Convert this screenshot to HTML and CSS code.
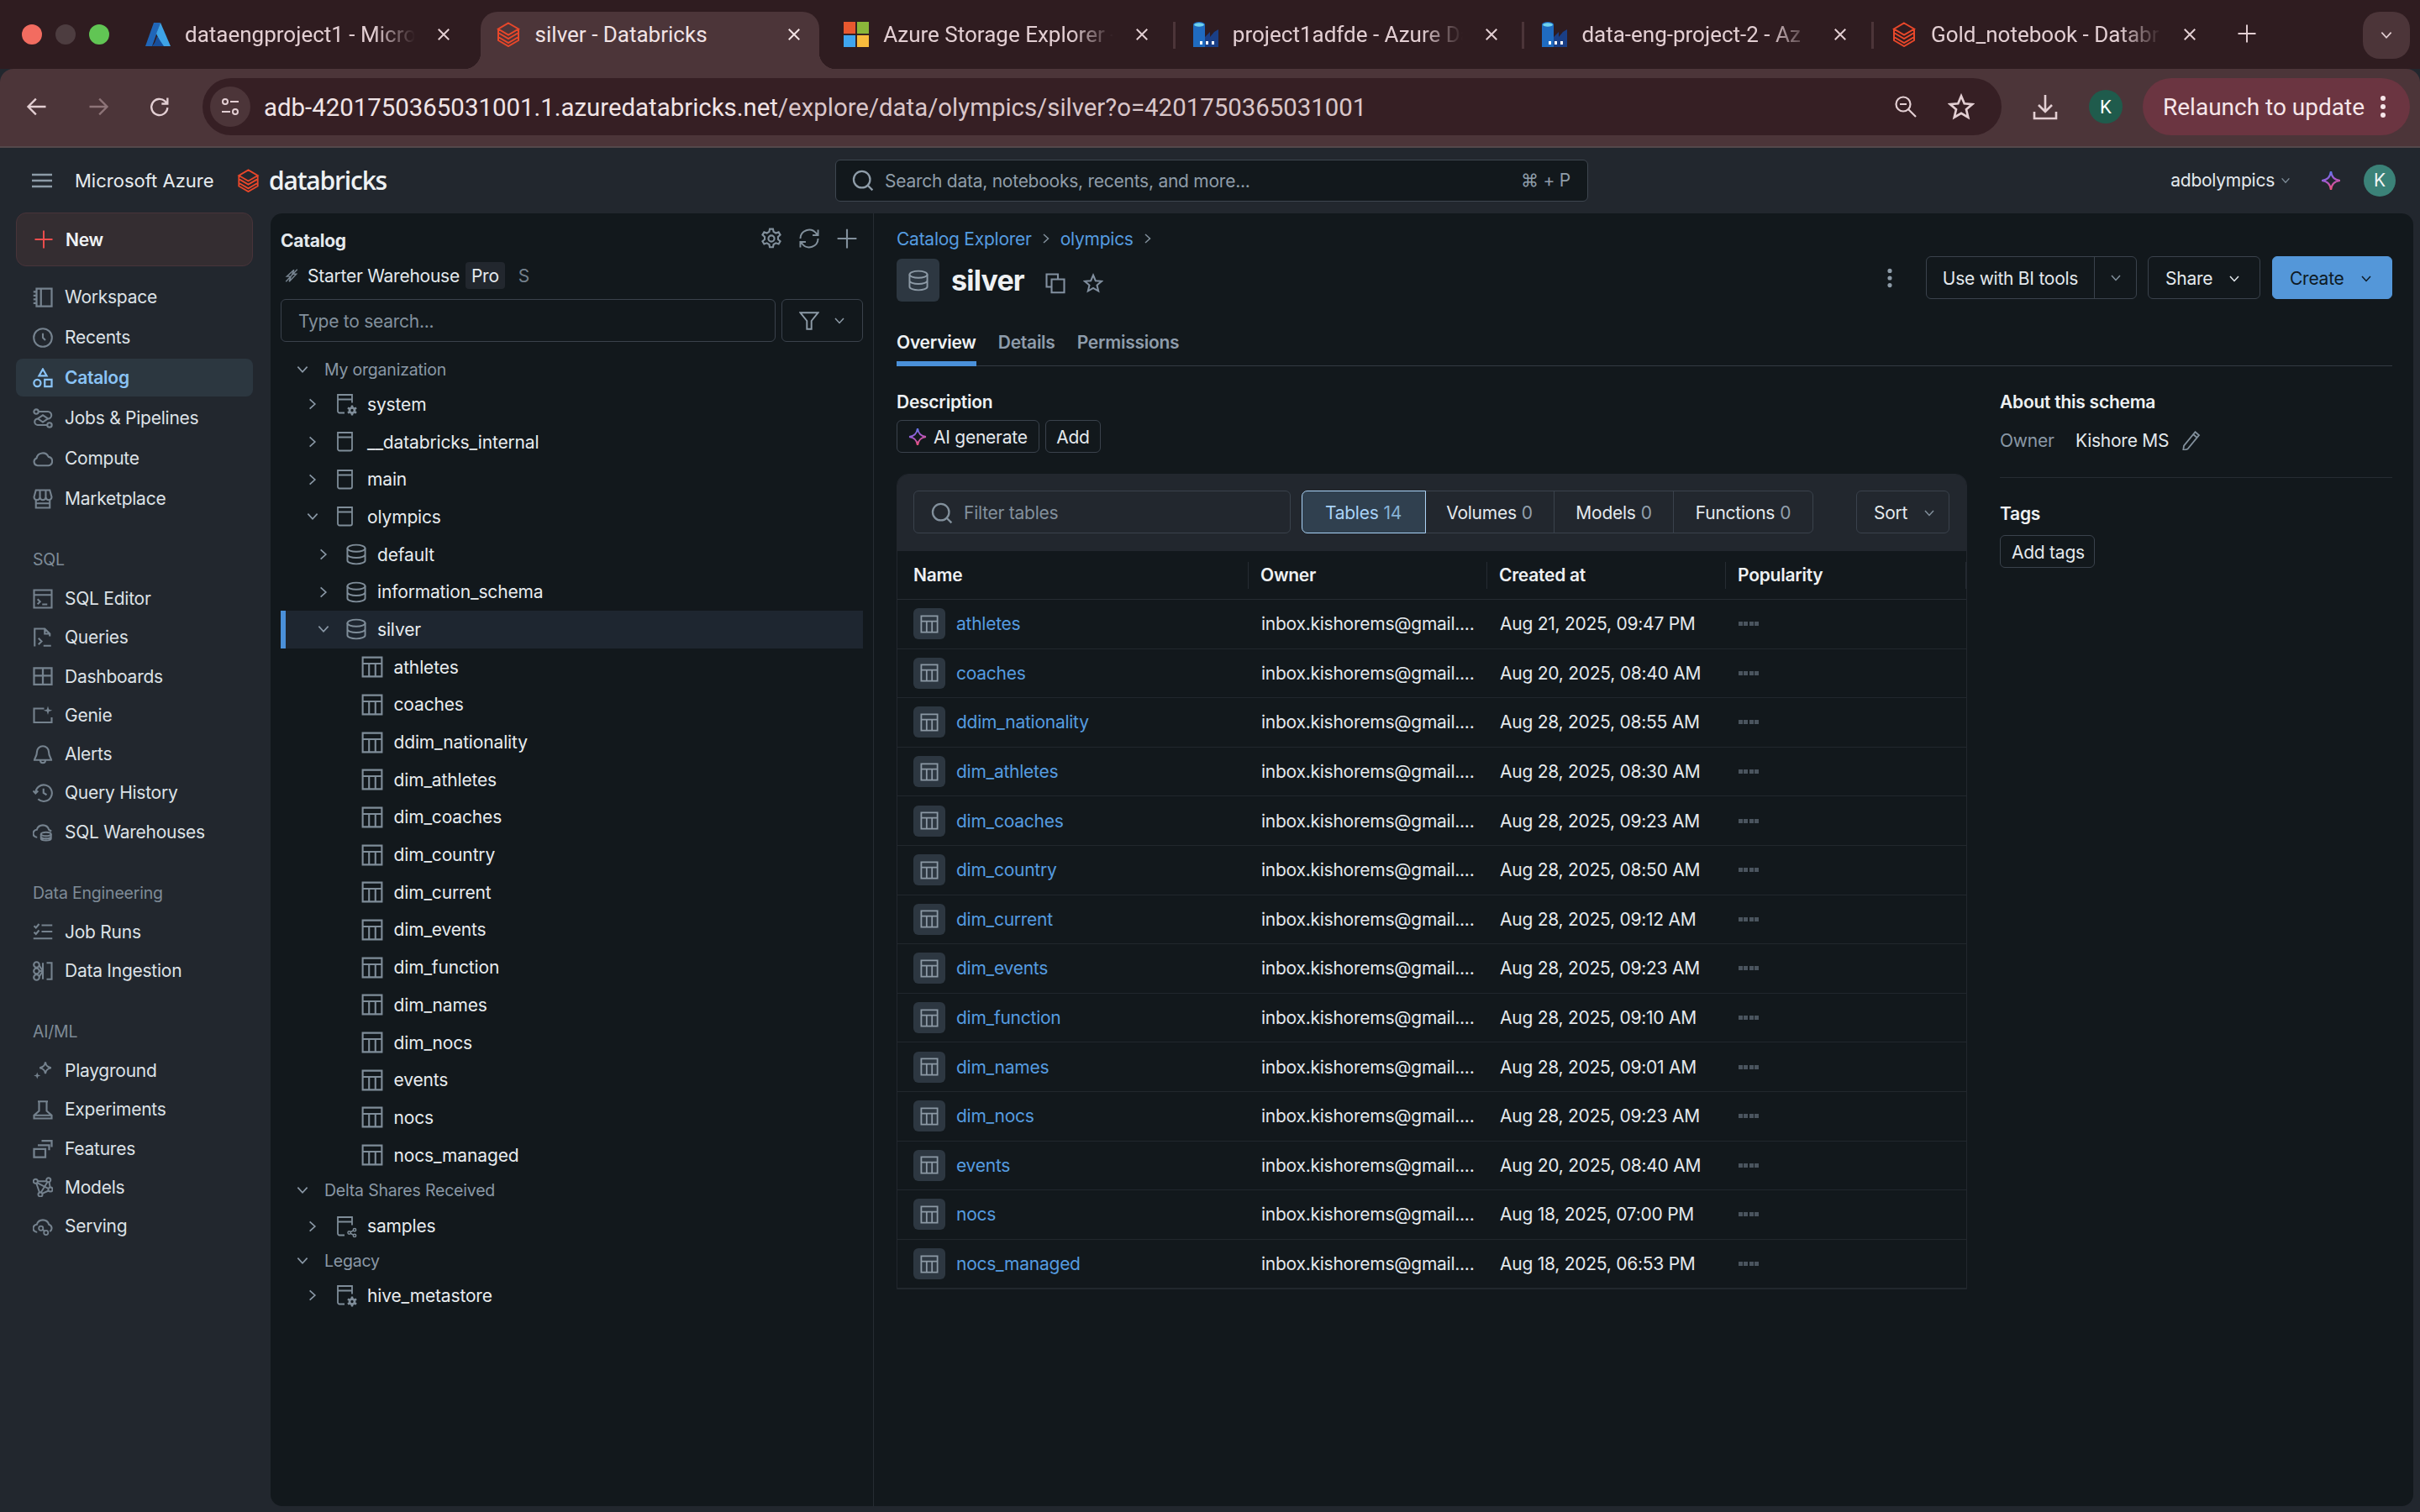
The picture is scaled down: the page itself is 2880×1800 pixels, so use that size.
FILE: index.html
```html
<!DOCTYPE html>
<html lang="en">
<head>
<meta charset="utf-8">
<title>silver - Databricks</title>
<link rel="stylesheet" href="styles.css">
</head>
<body>
<svg class="defs" xmlns="http://www.w3.org/2000/svg">
  <defs>
    <linearGradient id="spark" x1="0.2" y1="0" x2="0.6" y2="1"><stop offset="0" stop-color="#4f7df0"/><stop offset=".5" stop-color="#a858d0"/><stop offset="1" stop-color="#f0506e"/></linearGradient>
    <symbol id="dbx" viewBox="0 0 28 30"><path d="M14 1.5 26 8.5 14 15.5 2 8.5Z M2 8.5V13L14 20 26 13V8.5 M2 13V18L14 25 26 18V13 M2 18V22L14 29 26 22V18" fill="none" stroke="#e8472a" stroke-width="2"/></symbol>
    <symbol id="azure" viewBox="0 0 30 30"><path d="M10 1h8L8 29H0z" fill="#2066b8"/><path d="M18 1 30 29H20L13 14z" fill="#3ea3e6"/><path d="M14 17 22 29H8l3-4z" fill="#174f9c"/></symbol>
    <symbol id="ms" viewBox="0 0 32 32"><path d="M0 0h15v15H0z" fill="#e8582f"/><path d="M17 0h15v15H17z" fill="#8ab63a"/><path d="M0 17h15v15H0z" fill="#3fa5ef"/><path d="M17 17h15v15H17z" fill="#f7bb3d"/></symbol>
    <symbol id="adf" viewBox="0 0 30 30"><path d="M0 3a7 3 0 0 1 14 0v27H0z" fill="#1f6bc0"/><ellipse cx="7" cy="3.5" rx="6" ry="2.2" fill="#6fd3ee"/><path d="M14 18 20 12v6l5-6 5-3v21H14z" fill="#1a3f86"/><path d="M8 23h3v4H8zM15 23h3v4h-3zM22 23h3v4h-3z" fill="#fff"/></symbol>
    <symbol id="x" viewBox="0 0 16 16"><path d="M3 3 13 13M13 3 3 13" fill="none" stroke="currentColor" stroke-width="1.6"/></symbol>
    <symbol id="plus" viewBox="0 0 16 16"><path d="M8 1v14M1 8h14" fill="none" stroke="currentColor" stroke-width="1.3"/></symbol>
    <symbol id="cd" viewBox="0 0 16 16"><path d="M3 5 8 10.5 13 5" fill="none" stroke="currentColor" stroke-width="1.5"/></symbol>
    <symbol id="cr" viewBox="0 0 16 16"><path d="M5 3 10.5 8 5 13" fill="none" stroke="currentColor" stroke-width="1.5"/></symbol>
    <symbol id="back" viewBox="0 0 24 24"><path d="M21 12H4M11 4l-8 8 8 8" fill="none" stroke="currentColor" stroke-width="2"/></symbol>
    <symbol id="fwd" viewBox="0 0 24 24"><path d="M3 12h17M13 4l8 8-8 8" fill="none" stroke="currentColor" stroke-width="2"/></symbol>
    <symbol id="reload" viewBox="0 0 24 24"><path d="M20 13a8.2 8.2 0 1 1-2.6-6.6L20 9M20 3v6h-6" fill="none" stroke="currentColor" stroke-width="2"/></symbol>
    <symbol id="site" viewBox="0 0 24 24"><g fill="none" stroke="currentColor" stroke-width="2"><circle cx="6" cy="6" r="3"/><path d="M12 6h10M2 18h10"/><circle cx="18" cy="18" r="3"/></g></symbol>
    <symbol id="zoomout" viewBox="0 0 28 28"><g fill="none" stroke="currentColor" stroke-width="2.2"><circle cx="11" cy="11" r="8.5"/><path d="M17 17l9 9M7 11h8"/></g></symbol>
    <symbol id="star" viewBox="0 0 24 24"><path d="M12 2.5l2.8 6.7 7.2.6-5.5 4.7 1.7 7-6.2-3.7-6.2 3.7 1.7-7L2 9.8l7.2-.6z" fill="none" stroke="currentColor" stroke-width="2"/></symbol>
    <symbol id="dl" viewBox="0 0 32 32"><path d="M16 2v20M8 14l8 8 8-8M3 22v8h26v-8" fill="none" stroke="currentColor" stroke-width="2.6"/></symbol>
    <symbol id="burger" viewBox="0 0 24 18"><path d="M0 2h24M0 9h24M0 16h24" fill="none" stroke="currentColor" stroke-width="2.4"/></symbol>
    <symbol id="search" viewBox="0 0 16 16"><g fill="none" stroke="currentColor" stroke-width="1.4"><circle cx="7.2" cy="7.2" r="6"/><path d="M11.5 11.5 15 15"/></g></symbol>
    <symbol id="sparkle" viewBox="0 0 16 16"><path d="M8 .8c.7 4.6 2.600 6.5 7.200 7.200-4.600.7-6.500 2.600-7.200 7.200-.7-4.600-2.600-6.500-7.200-7.200C5.400 7.300 7.300 5.400 8 .8z" fill="none" stroke="url(#spark)" stroke-width="1.5"/></symbol>
    <symbol id="n-ws" viewBox="0 0 16 16"><path d="M3 1h12v14H3zM6.5 1v14M.5 3.5H3M.5 6.5H3M.5 9.5H3M.5 12.5H3" fill="none" stroke="currentColor" stroke-width="1.5"/></symbol>
    <symbol id="n-clock" viewBox="0 0 16 16"><g fill="none" stroke="currentColor" stroke-width="1.4"><circle cx="8" cy="8" r="7.2"/><path d="M8 4.5V8l2 2"/></g></symbol>
    <symbol id="n-cat" viewBox="0 0 16 16"><g fill="none" stroke="currentColor" stroke-width="1.5"><path d="M8 1l3 5.2H5z"/><circle cx="3.6" cy="12" r="2.7"/><path d="M9.5 9.3h5.500v5.400H9.500z"/></g></symbol>
    <symbol id="n-jobs" viewBox="0 0 16 16"><g fill="none" stroke="currentColor" stroke-width="1.4"><circle cx="2.7" cy="2.7" r="1.8"/><circle cx="13.3" cy="13.3" r="1.8"/><path d="M4.5 2.7H12a2.8 2.8 0 0 1 0 5.6L8 5.500 4 8.300"/><path d="M4 8.300a2.500 2.500 0 0 0 0 5h7.500M4 8.300l4 2.700 4-2.700"/></g></symbol>
    <symbol id="n-cloud" viewBox="0 0 16 16"><path d="M3.800 13.500A3 3 0 0 1 3 7.700 5 5 0 0 1 12.500 6.600 3.500 3.500 0 0 1 12.500 13.500z" fill="none" stroke="currentColor" stroke-width="1.4"/></symbol>
    <symbol id="n-store" viewBox="0 0 16 16"><path d="M1 6.500 2.500 1h11L15 6.500a2.300 2.300 0 0 1-4.700 0 2.300 2.300 0 0 1-4.600 0 2.300 2.300 0 0 1-4.700 0zM5.700 1v5.500M10.300 1v5.500M2.500 9v6h11V9M2.500 11.500h11" fill="none" stroke="currentColor" stroke-width="1.4"/></symbol>
    <symbol id="n-edit" viewBox="0 0 16 16"><path d="M1 1h14v14H1zM1 4.800h14M3.800 8.200l2 2-2 2M7.500 12.300h4" fill="none" stroke="currentColor" stroke-width="1.4"/></symbol>
    <symbol id="n-query" viewBox="0 0 16 16"><path d="M1.500 15V1h8l4 4v2M9.500 1v4h4M4.500 8.500l2.500 2.500-2.500 2.500M8.500 14.500h6" fill="none" stroke="currentColor" stroke-width="1.4"/></symbol>
    <symbol id="n-dash" viewBox="0 0 16 16"><path d="M1 1.500h14v13H1zM1 7.500h14M8 1.500v13" fill="none" stroke="currentColor" stroke-width="1.5"/></symbol>
    <symbol id="n-genie" viewBox="0 0 16 16"><path d="M9 3H1v11h14V10" fill="none" stroke="currentColor" stroke-width="1.4"/><path d="M12 1l.8 2.700 2.700.8-2.700.8L12 8l-.8-2.700-2.700-.8 2.700-.8z" fill="currentColor"/></symbol>
    <symbol id="n-bell" viewBox="0 0 16 16"><path d="M8 1.500A4.700 4.700 0 0 0 3.300 6.200c0 3.500-2 5-2 6.300h13.400c0-1.300-2-2.800-2-6.300A4.700 4.700 0 0 0 8 1.500zM6 12.800a2 2 0 0 0 4 0" fill="none" stroke="currentColor" stroke-width="1.4"/></symbol>
    <symbol id="n-hist" viewBox="0 0 16 16"><path d="M2.200 8a6.500 6.500 0 1 1 2 4.800M.3 6.300 2.200 8.300l2-2M8.500 4.500V8l2.500 1.500" fill="none" stroke="currentColor" stroke-width="1.4"/></symbol>
    <symbol id="n-wh" viewBox="0 0 16 16"><path d="M3.500 12.500a3 3 0 0 1-.3-6 5 5 0 0 1 9.600 0l2 1.200" fill="none" stroke="currentColor" stroke-width="1.4"/><g fill="none" stroke="currentColor" stroke-width="1.3"><ellipse cx="10.5" cy="10" rx="4" ry="1.5"/><path d="M6.500 10v3.500c0 .8 1.800 1.500 4 1.500s4-.7 4-1.500V10M6.500 12c0 .8 1.800 1.500 4 1.500s4-.7 4-1.500"/></g></symbol>
    <symbol id="n-runs" viewBox="0 0 16 16"><path d="M1 3.500l1.500 1.500L5 2M7 3h8.500M1 8.500 2.500 10 5 7M7 8h8.500M.5 13.500h15" fill="none" stroke="currentColor" stroke-width="1.4"/></symbol>
    <symbol id="n-ing" viewBox="0 0 16 16"><g fill="none" stroke="currentColor" stroke-width="1.4"><circle cx="3" cy="3" r="2.2"/><circle cx="3" cy="8" r="2.2"/><circle cx="3" cy="13" r="2.2"/><path d="M5 3.500 8 8l-3 4.500M5.200 8H8M8 1.500v13M11 1.500h4v13h-4"/></g></symbol>
    <symbol id="n-play" viewBox="0 0 16 16"><path d="M10 1c.4 2.700 1.400 3.800 4.500 4.500-3.100.7-4.100 1.800-4.500 4.500-.4-2.700-1.400-3.800-4.500-4.500C8.600 4.800 9.600 3.700 10 1z" fill="none" stroke="currentColor" stroke-width="1.4"/><path d="M3.500 9l.7 2 2 .7-2 .7-.7 2-.7-2-2-.7 2-.7z" fill="currentColor"/></symbol>
    <symbol id="n-flask" viewBox="0 0 16 16"><path d="M4 1.500h8M5 1.500V9L1 12.500v2.500h14v-2.500L11 9V1.500M1.500 12.500h13" fill="none" stroke="currentColor" stroke-width="1.4"/></symbol>
    <symbol id="n-feat" viewBox="0 0 16 16"><path d="M1 8.500h9v6.500H1zM4 5.500h9v4M7 2h8v5" fill="none" stroke="currentColor" stroke-width="1.5"/></symbol>
    <symbol id="n-model" viewBox="0 0 16 16"><g fill="none" stroke="currentColor" stroke-width="1.3"><circle cx="2.2" cy="3.500" r="1.7"/><circle cx="12.5" cy="2.500" r="1.7"/><circle cx="14" cy="10" r="1.7"/><circle cx="6" cy="14" r="1.7"/><path d="M3.900 3.500h6.900M3.500 4.800l8.800 4.500M11.700 4 6.500 12.400M12.500 11l-5 2.300M13 4l.8 4.400M2.800 5l2.600 7.500"/></g></symbol>
    <symbol id="n-serve" viewBox="0 0 16 16"><path d="M3.500 12.500a3 3 0 0 1-.3-6 5 5 0 0 1 9.600 0 3 3 0 0 1 .7 5.500" fill="none" stroke="currentColor" stroke-width="1.4"/><g fill="none" stroke="currentColor" stroke-width="1.2"><circle cx="6.500" cy="9.500" r="1.7"/><circle cx="10.500" cy="13" r="1.7"/><path d="M8 10.500l1.200 1.200"/></g></symbol>
    <symbol id="share" viewBox="0 0 16 16"><g fill="none" stroke="currentColor" stroke-width="2"><circle cx="3.500" cy="8" r="2.200"/><circle cx="12" cy="3.500" r="2.200"/><circle cx="12" cy="12.500" r="2.200"/><path d="M5.500 7l4.500-2.500M5.500 9l4.500 2.500"/></g></symbol>
    <symbol id="gear" viewBox="0 0 16 16"><g fill="none" stroke="currentColor" stroke-width="1.3"><circle cx="8" cy="8" r="2.200"/><path d="M6.800 1h2.400l.4 2 1.700 1 2-.7 1.200 2-1.600 1.400v1.900l1.600 1.400-1.200 2-2-.7-1.700 1-.4 2H6.800l-.4-2-1.700-1-2 .7-1.200-2 1.600-1.400V6.700L1.500 5.300l1.200-2 2 .7 1.700-1z"/></g></symbol>
    <symbol id="gearfill" viewBox="0 0 16 16"><path d="M6.500 0h3l.4 2.400 1.900 1.100 2.300-.9 1.500 2.600-1.900 1.500v2.600l1.900 1.500-1.500 2.600-2.300-.9-1.900 1.100-.4 2.400h-3l-.4-2.400-1.900-1.100-2.300.9L.4 10.800l1.900-1.500V6.700L.4 5.200l1.500-2.600 2.300.9 1.900-1.100zM8 5.800a2.200 2.200 0 1 0 0 4.400 2.200 2.200 0 0 0 0-4.400z" fill="currentColor" fill-rule="evenodd"/></symbol>
    <symbol id="refresh" viewBox="0 0 16 16"><path d="M1.500 8A6.500 6.500 0 0 1 13 4l1.500 1.500M14.500 1.500v4h-4M14.500 8A6.500 6.500 0 0 1 3 12l-1.500-1.500M1.500 14.500v-4h4" fill="none" stroke="currentColor" stroke-width="1.2"/></symbol>
    <symbol id="slash" viewBox="0 0 16 16"><path d="M10.500 2 8.800 6.500H13L5.500 14.500l1.700-5.500H3zM14 1.500 2 14.500" fill="none" stroke="currentColor" stroke-width="1.300"/></symbol>
    <symbol id="filter" viewBox="0 0 16 16"><path d="M1 1.500h14L9.800 8v6.500H6.200V8z" fill="none" stroke="currentColor" stroke-width="1.3"/></symbol>
    <symbol id="cat" viewBox="0 0 20 24"><path d="M9 23H3a2 2 0 0 1-2-2V1.500h17V11M1 7h17" fill="none" stroke="currentColor" stroke-width="1.8"/></symbol>
    <symbol id="cat-plain" viewBox="0 0 20 24"><path d="M3 23a2 2 0 0 1-2-2V1.500h17V21a2 2 0 0 1-2 2zM1 7h17" fill="none" stroke="currentColor" stroke-width="1.8"/></symbol>
    <symbol id="db" viewBox="0 0 16 16"><g fill="none" stroke="currentColor" stroke-width="1.2"><ellipse cx="8" cy="3.500" rx="6.500" ry="2.500"/><path d="M1.500 3.500v9c0 1.400 2.900 2.500 6.500 2.500s6.500-1.100 6.500-2.500v-9M1.500 8c0 1.400 2.900 2.500 6.500 2.500S14.500 9.400 14.500 8"/></g></symbol>
    <symbol id="tbl" viewBox="0 0 16 16"><path d="M1 1h14v14H1zM1 5.500h14M5.670 5.500V15M10.330 5.500V15" fill="none" stroke="currentColor" stroke-width="1.3"/></symbol>
    <symbol id="copy" viewBox="0 0 16 16"><path d="M10 4.500V1H1v10h4M5 5h10v10.500H5z" fill="none" stroke="currentColor" stroke-width="1.4"/></symbol>
    <symbol id="kebab" viewBox="0 0 8 28"><g fill="currentColor"><circle cx="4" cy="4" r="3"/><circle cx="4" cy="14" r="3"/><circle cx="4" cy="24" r="3"/></g></symbol>
    <symbol id="pencil" viewBox="0 0 16 16"><path d="M11 1.500l3 2.500-9 11-3.500 1 .5-3.500zM9.500 3.500l3 2.500" fill="none" stroke="currentColor" stroke-width="1.2"/></symbol>
  </defs>
</svg>

<header class="tabstrip">
  <div class="lights"><i class="light red"></i><i class="light gray"></i><i class="light green"></i></div>
  <div class="tab"><svg class="fav"><use href="#azure"/></svg><span class="tab-title">dataengproject1 - Micros</span><svg class="tab-x"><use href="#x"/></svg></div>
  <div class="tab active"><svg class="fav"><use href="#dbx"/></svg><span class="tab-title">silver - Databricks</span><svg class="tab-x"><use href="#x"/></svg></div>
  <div class="tab"><svg class="fav"><use href="#ms"/></svg><span class="tab-title">Azure Storage Explorer -</span><svg class="tab-x"><use href="#x"/></svg></div>
  <div class="tab sep"><svg class="fav"><use href="#adf"/></svg><span class="tab-title">project1adfde - Azure Da</span><svg class="tab-x"><use href="#x"/></svg></div>
  <div class="tab sep"><svg class="fav"><use href="#adf"/></svg><span class="tab-title">data-eng-project-2 - Az</span><svg class="tab-x"><use href="#x"/></svg></div>
  <div class="tab sep"><svg class="fav"><use href="#dbx"/></svg><span class="tab-title">Gold_notebook - Databr</span><svg class="tab-x"><use href="#x"/></svg></div>
  <svg class="newtab"><use href="#plus"/></svg>
  <div class="tablist"><svg class="ic-18"><use href="#cd"/></svg></div>
</header>

<div class="toolbar">
  <svg class="tb-ic"><use href="#back"/></svg>
  <svg class="tb-ic dim"><use href="#fwd"/></svg>
  <svg class="tb-ic"><use href="#reload"/></svg>
  <div class="omnibox">
    <div class="siteinfo"><svg class="ic-24"><use href="#site"/></svg></div>
    <span class="url"><span class="url-host">adb-4201750365031001.1.azuredatabricks.net</span>/explore/data/olympics/silver?o=4201750365031001</span>
    <svg class="omni-ic"><use href="#zoomout"/></svg>
    <svg class="omni-ic star"><use href="#star"/></svg>
  </div>
  <svg class="dl"><use href="#dl"/></svg>
  <div class="chrome-avatar">K</div>
  <div class="relaunch"><span>Relaunch to update</span><svg class="kebab-w"><use href="#kebab"/></svg></div>
</div>

<div class="appbar">
  <svg class="burger"><use href="#burger"/></svg>
  <span class="azure">Microsoft Azure</span>
  <svg class="logo"><use href="#dbx"/></svg>
  <span class="wordmark">databricks</span>
  <div class="globalsearch"><svg class="ic-26"><use href="#search"/></svg><span class="gs-ph">Search data, notebooks, recents, and more...</span><span class="gs-key">⌘ + P</span></div>
  <span class="wsname">adbolympics</span><svg class="ic-14 muted"><use href="#cd"/></svg>
  <svg class="appspark"><use href="#sparkle"/></svg>
  <div class="useravatar">K</div>
</div>

<div class="shell">
  <nav class="sidenav">
    <div class="newbtn"><svg class="ic-24 red-ic"><use href="#plus"/></svg><span>New</span></div>
    <div class="navgroup first">
      <a class="navitem"><svg class="ic-24"><use href="#n-ws"/></svg><span>Workspace</span></a>
      <a class="navitem"><svg class="ic-24"><use href="#n-clock"/></svg><span>Recents</span></a>
      <a class="navitem current"><svg class="ic-24"><use href="#n-cat"/></svg><span>Catalog</span></a>
      <a class="navitem"><svg class="ic-24"><use href="#n-jobs"/></svg><span>Jobs &amp; Pipelines</span></a>
      <a class="navitem"><svg class="ic-24"><use href="#n-cloud"/></svg><span>Compute</span></a>
      <a class="navitem"><svg class="ic-24"><use href="#n-store"/></svg><span>Marketplace</span></a>
    </div>
    <div class="navlabel">SQL</div>
    <div class="navgroup">
      <a class="navitem"><svg class="ic-24"><use href="#n-edit"/></svg><span>SQL Editor</span></a>
      <a class="navitem"><svg class="ic-24"><use href="#n-query"/></svg><span>Queries</span></a>
      <a class="navitem"><svg class="ic-24"><use href="#n-dash"/></svg><span>Dashboards</span></a>
      <a class="navitem"><svg class="ic-24"><use href="#n-genie"/></svg><span>Genie</span></a>
      <a class="navitem"><svg class="ic-24"><use href="#n-bell"/></svg><span>Alerts</span></a>
      <a class="navitem"><svg class="ic-24"><use href="#n-hist"/></svg><span>Query History</span></a>
      <a class="navitem"><svg class="ic-24"><use href="#n-wh"/></svg><span>SQL Warehouses</span></a>
    </div>
    <div class="navlabel">Data Engineering</div>
    <div class="navgroup">
      <a class="navitem"><svg class="ic-24"><use href="#n-runs"/></svg><span>Job Runs</span></a>
      <a class="navitem"><svg class="ic-24"><use href="#n-ing"/></svg><span>Data Ingestion</span></a>
    </div>
    <div class="navlabel">AI/ML</div>
    <div class="navgroup">
      <a class="navitem"><svg class="ic-24"><use href="#n-play"/></svg><span>Playground</span></a>
      <a class="navitem"><svg class="ic-24"><use href="#n-flask"/></svg><span>Experiments</span></a>
      <a class="navitem"><svg class="ic-24"><use href="#n-feat"/></svg><span>Features</span></a>
      <a class="navitem"><svg class="ic-24"><use href="#n-model"/></svg><span>Models</span></a>
      <a class="navitem"><svg class="ic-24"><use href="#n-serve"/></svg><span>Serving</span></a>
    </div>
  </nav>

  <div class="panel">
    <aside class="catalog">
      <div class="cat-head"><strong>Catalog</strong><div class="cat-tools"><svg class="ic-26"><use href="#gear"/></svg><svg class="ic-26"><use href="#refresh"/></svg><svg class="ic-26"><use href="#plus"/></svg></div></div>
      <div class="warehouse"><svg class="ic-18"><use href="#slash"/></svg><span class="wh-name">Starter Warehouse</span><span class="pill">Pro</span><span class="wh-size">S</span></div>
      <div class="cat-search"><div class="cat-input">Type to search...</div><div class="cat-filter"><svg class="ic-24"><use href="#filter"/></svg><svg class="ic-16"><use href="#cd"/></svg></div></div>
      <div class="tree">
        <div class="tree-label org"><svg class="chev"><use href="#cd"/></svg><span>My organization</span></div>
        <div class="row l1"><svg class="chev"><use href="#cr"/></svg><span class="catic"><svg class="ic-cat"><use href="#cat"/></svg><svg class="badge"><use href="#gearfill"/></svg></span><span>system</span></div>
        <div class="row l1"><svg class="chev"><use href="#cr"/></svg><span class="catic"><svg class="ic-cat"><use href="#cat-plain"/></svg></span><span>__databricks_internal</span></div>
        <div class="row l1"><svg class="chev"><use href="#cr"/></svg><span class="catic"><svg class="ic-cat"><use href="#cat-plain"/></svg></span><span>main</span></div>
        <div class="row l1"><svg class="chev"><use href="#cd"/></svg><span class="catic"><svg class="ic-cat"><use href="#cat-plain"/></svg></span><span>olympics</span></div>
        <div class="row l2"><svg class="chev"><use href="#cr"/></svg><svg class="ic-db"><use href="#db"/></svg><span>default</span></div>
        <div class="row l2"><svg class="chev"><use href="#cr"/></svg><svg class="ic-db"><use href="#db"/></svg><span>information_schema</span></div>
        <div class="row l2 selected"><svg class="chev"><use href="#cd"/></svg><svg class="ic-db"><use href="#db"/></svg><span>silver</span></div>
        <div class="row l3"><svg class="ic-tbl"><use href="#tbl"/></svg><span>athletes</span></div>
        <div class="row l3"><svg class="ic-tbl"><use href="#tbl"/></svg><span>coaches</span></div>
        <div class="row l3"><svg class="ic-tbl"><use href="#tbl"/></svg><span>ddim_nationality</span></div>
        <div class="row l3"><svg class="ic-tbl"><use href="#tbl"/></svg><span>dim_athletes</span></div>
        <div class="row l3"><svg class="ic-tbl"><use href="#tbl"/></svg><span>dim_coaches</span></div>
        <div class="row l3"><svg class="ic-tbl"><use href="#tbl"/></svg><span>dim_country</span></div>
        <div class="row l3"><svg class="ic-tbl"><use href="#tbl"/></svg><span>dim_current</span></div>
        <div class="row l3"><svg class="ic-tbl"><use href="#tbl"/></svg><span>dim_events</span></div>
        <div class="row l3"><svg class="ic-tbl"><use href="#tbl"/></svg><span>dim_function</span></div>
        <div class="row l3"><svg class="ic-tbl"><use href="#tbl"/></svg><span>dim_names</span></div>
        <div class="row l3"><svg class="ic-tbl"><use href="#tbl"/></svg><span>dim_nocs</span></div>
        <div class="row l3"><svg class="ic-tbl"><use href="#tbl"/></svg><span>events</span></div>
        <div class="row l3"><svg class="ic-tbl"><use href="#tbl"/></svg><span>nocs</span></div>
        <div class="row l3"><svg class="ic-tbl"><use href="#tbl"/></svg><span>nocs_managed</span></div>
        <div class="tree-label"><svg class="chev"><use href="#cd"/></svg><span>Delta Shares Received</span></div>
        <div class="row l1"><svg class="chev"><use href="#cr"/></svg><span class="catic"><svg class="ic-cat"><use href="#cat"/></svg><svg class="badge"><use href="#share"/></svg></span><span>samples</span></div>
        <div class="tree-label legacy"><svg class="chev"><use href="#cd"/></svg><span>Legacy</span></div>
        <div class="row l1"><svg class="chev"><use href="#cr"/></svg><span class="catic"><svg class="ic-cat"><use href="#cat"/></svg><svg class="badge"><use href="#gearfill"/></svg></span><span>hive_metastore</span></div>
      </div>
    </aside>

    <main class="content">
      <div class="crumbs"><a>Catalog Explorer</a><svg class="ic-16 muted"><use href="#cr"/></svg><a>olympics</a><svg class="ic-16 muted"><use href="#cr"/></svg></div>
      <div class="titlerow">
        <div class="schema-box"><svg class="ic-26"><use href="#db"/></svg></div>
        <h1>silver</h1>
        <svg class="title-ic copy"><use href="#copy"/></svg>
        <svg class="title-ic"><use href="#star"/></svg>
        <div class="actions">
          <svg class="act-kebab"><use href="#kebab"/></svg>
          <div class="split"><span class="split-main">Use with BI tools</span><span class="split-chev"><svg class="ic-16 muted"><use href="#cd"/></svg></span></div>
          <div class="btn share"><span>Share</span><svg class="ic-16"><use href="#cd"/></svg></div>
          <div class="btn primary"><span>Create</span><svg class="ic-16"><use href="#cd"/></svg></div>
        </div>
      </div>
      <div class="tabs"><a class="ptab on">Overview</a><a class="ptab">Details</a><a class="ptab">Permissions</a></div>
      <div class="columns">
        <section class="leftcol">
          <h2>Description</h2>
          <div class="desc-btns"><div class="sbtn ai"><svg class="ic-22"><use href="#sparkle"/></svg><span>AI generate</span></div><div class="sbtn add">Add</div></div>
          <div class="card">
            <div class="card-tools">
              <div class="filterbox"><svg class="ic-26"><use href="#search"/></svg><span>Filter tables</span></div>
              <div class="seg"><span class="on w1">Tables <em>14</em></span><span class="w2">Volumes <em>0</em></span><span class="w3">Models <em>0</em></span><span class="w4">Functions <em>0</em></span></div>
              <div class="sort"><span>Sort</span><svg class="ic-16 muted"><use href="#cd"/></svg></div>
            </div>
            <div class="thead"><div class="th">Name</div><div class="th">Owner</div><div class="th">Created at</div><div class="th">Popularity</div></div>
            <div class="tr"><div class="td name"><span class="tbox"><svg class="ic-22"><use href="#tbl"/></svg></span><a>athletes</a></div><div class="td">inbox.kishorems@gmail....</div><div class="td">Aug 21, 2025, 09:47 PM</div><div class="td"><i class="pop"></i></div></div>
            <div class="tr"><div class="td name"><span class="tbox"><svg class="ic-22"><use href="#tbl"/></svg></span><a>coaches</a></div><div class="td">inbox.kishorems@gmail....</div><div class="td">Aug 20, 2025, 08:40 AM</div><div class="td"><i class="pop"></i></div></div>
            <div class="tr"><div class="td name"><span class="tbox"><svg class="ic-22"><use href="#tbl"/></svg></span><a>ddim_nationality</a></div><div class="td">inbox.kishorems@gmail....</div><div class="td">Aug 28, 2025, 08:55 AM</div><div class="td"><i class="pop"></i></div></div>
            <div class="tr"><div class="td name"><span class="tbox"><svg class="ic-22"><use href="#tbl"/></svg></span><a>dim_athletes</a></div><div class="td">inbox.kishorems@gmail....</div><div class="td">Aug 28, 2025, 08:30 AM</div><div class="td"><i class="pop"></i></div></div>
            <div class="tr"><div class="td name"><span class="tbox"><svg class="ic-22"><use href="#tbl"/></svg></span><a>dim_coaches</a></div><div class="td">inbox.kishorems@gmail....</div><div class="td">Aug 28, 2025, 09:23 AM</div><div class="td"><i class="pop"></i></div></div>
            <div class="tr"><div class="td name"><span class="tbox"><svg class="ic-22"><use href="#tbl"/></svg></span><a>dim_country</a></div><div class="td">inbox.kishorems@gmail....</div><div class="td">Aug 28, 2025, 08:50 AM</div><div class="td"><i class="pop"></i></div></div>
            <div class="tr"><div class="td name"><span class="tbox"><svg class="ic-22"><use href="#tbl"/></svg></span><a>dim_current</a></div><div class="td">inbox.kishorems@gmail....</div><div class="td">Aug 28, 2025, 09:12 AM</div><div class="td"><i class="pop"></i></div></div>
            <div class="tr"><div class="td name"><span class="tbox"><svg class="ic-22"><use href="#tbl"/></svg></span><a>dim_events</a></div><div class="td">inbox.kishorems@gmail....</div><div class="td">Aug 28, 2025, 09:23 AM</div><div class="td"><i class="pop"></i></div></div>
            <div class="tr"><div class="td name"><span class="tbox"><svg class="ic-22"><use href="#tbl"/></svg></span><a>dim_function</a></div><div class="td">inbox.kishorems@gmail....</div><div class="td">Aug 28, 2025, 09:10 AM</div><div class="td"><i class="pop"></i></div></div>
            <div class="tr"><div class="td name"><span class="tbox"><svg class="ic-22"><use href="#tbl"/></svg></span><a>dim_names</a></div><div class="td">inbox.kishorems@gmail....</div><div class="td">Aug 28, 2025, 09:01 AM</div><div class="td"><i class="pop"></i></div></div>
            <div class="tr"><div class="td name"><span class="tbox"><svg class="ic-22"><use href="#tbl"/></svg></span><a>dim_nocs</a></div><div class="td">inbox.kishorems@gmail....</div><div class="td">Aug 28, 2025, 09:23 AM</div><div class="td"><i class="pop"></i></div></div>
            <div class="tr"><div class="td name"><span class="tbox"><svg class="ic-22"><use href="#tbl"/></svg></span><a>events</a></div><div class="td">inbox.kishorems@gmail....</div><div class="td">Aug 20, 2025, 08:40 AM</div><div class="td"><i class="pop"></i></div></div>
            <div class="tr"><div class="td name"><span class="tbox"><svg class="ic-22"><use href="#tbl"/></svg></span><a>nocs</a></div><div class="td">inbox.kishorems@gmail....</div><div class="td">Aug 18, 2025, 07:00 PM</div><div class="td"><i class="pop"></i></div></div>
            <div class="tr"><div class="td name"><span class="tbox"><svg class="ic-22"><use href="#tbl"/></svg></span><a>nocs_managed</a></div><div class="td">inbox.kishorems@gmail....</div><div class="td">Aug 18, 2025, 06:53 PM</div><div class="td"><i class="pop"></i></div></div>
          </div>
        </section>
        <aside class="about">
          <h2>About this schema</h2>
          <div class="owner"><span class="owner-k">Owner</span><span>Kishore MS</span><svg class="ic-24 muted"><use href="#pencil"/></svg></div>
          <hr class="about-hr">
          <h2>Tags</h2>
          <div class="sbtn tagbtn">Add tags</div>
        </aside>
      </div>
    </main>
  </div>
</div>
</body>
</html>
```

FILE: styles.css
```css
* { box-sizing: border-box; }
html, body { margin: 0; padding: 0; }
body {
  width: 2880px; height: 1800px; overflow: hidden;
  display: flex; flex-direction: column;
  background: #22272e; color: #e4e9ed;
  font-family: Inter, "Liberation Sans", sans-serif; font-size: 21px; letter-spacing: -.25px;
}
svg { display: block; flex: none; }
.defs { width: 0; height: 0; overflow: hidden; }
em { font-style: normal; color: #92a0ad; }
a { color: inherit; text-decoration: none; }
h1, h2 { margin: 0; }
.muted { color: #82909c; }
.ic-14 { width: 14px; height: 14px; }
.ic-16 { width: 16px; height: 16px; }
.ic-18 { width: 18px; height: 18px; }
.ic-22 { width: 22px; height: 22px; }
.ic-24 { width: 24px; height: 24px; }
.ic-26 { width: 26px; height: 26px; }

/* browser chrome */
.tabstrip { height: 82px; flex: none; display: flex; align-items: flex-start; background: #2f1c20; color: #e3cfd3; font-family: Roboto, sans-serif; font-size: 26px; letter-spacing: 0; }
.lights { width: 150px; height: 82px; padding-left: 26px; display: flex; gap: 16px; align-items: center; flex: none; }
.light { width: 24px; height: 24px; border-radius: 50%; display: block; }
.red { background: #f26c60; } .gray { background: #4d3d40; } .green { background: #61c554; }
.tab { width: 415.6px; height: 68px; margin-top: 14px; padding-left: 23px; display: flex; align-items: center; flex: none; position: relative; border-radius: 20px 20px 0 0; }
.tab.active { background: #4c3539; color: #f1e3e5; margin-left: 6px; margin-right: 6px; width: 403.6px; padding-left: 18px; }
.tab.active::before, .tab.active::after { content: ""; position: absolute; bottom: 0; width: 20px; height: 20px; }
.tab.active::before { left: -20px; background: radial-gradient(circle at 0 0, transparent 20px, #4c3539 20.5px); }
.tab.active::after { right: -20px; background: radial-gradient(circle at 100% 0, transparent 20px, #4c3539 20.5px); }
.tab.sep::before { content: ""; position: absolute; left: -1px; top: 12px; width: 3px; height: 32px; background: #4c3539; }
.fav { width: 30px; height: 30px; margin-top: -14px; }
.tab-title { width: 274px; margin-left: 17px; margin-top: -14px; white-space: nowrap; -webkit-mask-image: linear-gradient(90deg, #000 82%, transparent); mask-image: linear-gradient(90deg, #000 82%, transparent); }
.tab.active .tab-title { -webkit-mask-image: none; mask-image: none; }
.tab-x { width: 20px; height: 20px; margin-left: 24px; margin-top: -14px; }
.newtab { width: 24px; height: 24px; margin: 28px 0 0 18px; }
.tablist { width: 56px; height: 56px; border-radius: 20px; background: #4c3539; margin: 14px 12px 0 auto; display: flex; align-items: center; justify-content: center; }

.toolbar { height: 94px; flex: none; display: flex; align-items: center; padding: 0 12px 2px 30px; background: #4c3539; border-bottom: 2px solid #54484b; border-radius: 16px 16px 0 0; color: #e3cfd3; font-family: Roboto, sans-serif; letter-spacing: 0; }
.tb-ic { width: 28px; height: 28px; margin-right: 45px; }
.tb-ic.dim { color: #8d7478; }
.tb-ic:nth-child(3) { margin-right: 0; }
.omnibox { width: 2141px; height: 68px; margin-left: 37px; background: #361f24; border-radius: 34px; display: flex; align-items: center; padding-left: 9px; }
.siteinfo { width: 48px; height: 48px; border-radius: 50%; background: #4c3539; display: flex; align-items: center; justify-content: center; }
.url { margin-left: 16px; padding-top: 2px; font-size: 29.4px; color: #d9c6c9; white-space: nowrap; flex: 1; }
.url-host { color: #f0e4e6; }
.omni-ic { width: 28px; height: 28px; margin-right: 36px; }
.omni-ic.star { width: 32px; height: 32px; margin-right: 32px; }
.dl { width: 32px; height: 32px; margin-left: 36px; }
.chrome-avatar { width: 40px; height: 40px; margin-left: 36px; border-radius: 50%; background: #1f5b4c; color: #fff; display: flex; align-items: center; justify-content: center; font-size: 22px; }
.relaunch { width: 318px; height: 68px; margin-left: 24px; border-radius: 34px; background: #6b3541; display: flex; align-items: center; padding-left: 24px; font-size: 28px; color: #f6e6e9; }
.relaunch span { width: 250px; white-space: nowrap; }
.kebab-w { width: 8px; height: 28px; margin-left: 8px; }

/* app bar */
.appbar { height: 77px; flex: none; display: flex; align-items: center; padding-left: 38px; background: #22272e; }
.burger { width: 24px; height: 18px; color: #8d9ba7; }
.azure { margin-left: 27px; width: 190px; color: #e6ebef; white-space: nowrap; font-size: 22px; letter-spacing: 0; }
.logo { width: 27px; height: 28px; margin-left: 3px; }
.wordmark { margin-left: 11px; width: 134px; font-size: 30px; font-weight: 600; letter-spacing: -1.2px; color: #eef1f3; font-family: "Open Sans", sans-serif; }
.globalsearch { width: 896px; height: 50px; margin-left: 540px; display: flex; align-items: center; padding: 0 20px 0 19px; background: #12181c; border: 1px solid #3e4650; border-radius: 6px; color: #8f9da9; }
.gs-ph { margin-left: 13px; flex: 1; padding-top: 1px; }
.gs-key { font-size: 21px; }
.wsname { margin-left: auto; color: #e4e9ed; }
.wsname + svg { margin-left: 6px; }
.appspark { width: 24px; height: 24px; margin-left: 35px; }
.useravatar { width: 38px; height: 38px; margin: 0 29px 0 27px; border-radius: 50%; background: #3b8278; color: #f1f5f5; display: flex; align-items: center; justify-content: center; font-size: 21px; }

.shell { flex: 1; display: flex; min-height: 0; }
.sidenav { width: 322px; flex: none; padding: 0 21px 0 19px; }
.newbtn { height: 64px; display: flex; align-items: center; gap: 14px; padding-left: 20px; background: #342d31; border: 1px solid #48343a; border-radius: 12px; font-weight: 600; color: #f0f3f5; }
.red-ic { color: #ef4d4d; }
.navgroup { display: flex; flex-direction: column; gap: 1.3px; }
.navgroup.first { gap: 3px; margin-top: 14px; }
.navitem { height: 45px; display: flex; align-items: center; gap: 14px; padding-left: 20px; color: #dde2e7; border-radius: 8px; white-space: nowrap; }
.navitem svg { color: #75828e; }
.navitem.current { background: #2c3740; color: #8ac3f5; font-weight: 600; }
.navitem.current svg { color: #8ac3f5; }
.navlabel { height: 30px; margin: 35px 0 9px; padding-left: 20px; line-height: 30px; color: #7e8b97; font-size: 19.5px; letter-spacing: -.2px; }

.panel { flex: 1; display: flex; margin: 1px 8px 7px 0; background: #12181c; border-radius: 14px; min-width: 0; overflow: hidden; }
.catalog { width: 718px; flex: none; padding: 0 12px; border-right: 1px solid #262c33; }
.cat-head { height: 60px; display: flex; align-items: center; justify-content: space-between; padding-top: 4px; }
.cat-head strong { font-weight: 700; }
.cat-tools { display: flex; align-items: center; gap: 19px; margin-right: 6px; color: #82909c; margin-top: -4px; }
.warehouse { height: 28px; display: flex; align-items: center; padding-left: 4px; }
.warehouse svg { color: #76838f; }
.wh-name { margin-left: 10px; white-space: nowrap; }
.pill { margin-left: 7px; height: 32px; padding: 0 7px; display: flex; align-items: center; border-radius: 4px; background: #22272e; }
.wh-size { margin-left: 16px; color: #74808c; }
.cat-search { display: flex; gap: 7px; margin-top: 14px; height: 51px; }
.cat-input { width: 589px; display: flex; align-items: center; padding: 2px 0 0 20px; border: 1px solid #3a424c; border-radius: 6px; color: #82909c; }
.cat-filter { flex: 1; display: flex; align-items: center; gap: 16px; padding-left: 20px; border: 1px solid #3a424c; border-radius: 6px; color: #8d9ba7; }
.tree { margin-top: 11px; }
.tree-label { height: 40px; display: flex; align-items: center; gap: 17px; padding-left: 17px; font-size: 19.5px; letter-spacing: -.2px; color: #8a98a6; white-space: nowrap; }
.tree-label.org { height: 41px; padding-top: 3px; }
.tree-label.legacy { height: 38px; }
.row { height: 44.7px; display: flex; align-items: center; white-space: nowrap; color: #e8ecef; letter-spacing: -.15px; }
.chev { width: 18px; height: 18px; color: #8a98a6; }
.l1 { padding-left: 29px; }
.catic { width: 24px; height: 26px; margin: 0 12px 0 20px; position: relative; color: #7f8d99; }
.ic-cat { width: 20px; height: 25px; }
.badge { position: absolute; right: 0; bottom: -1px; width: 12px; height: 13px; color: #7f8d99; }
.l2 { padding-left: 42px; }
.ic-db { width: 26px; height: 26px; margin: 0 12px 0 17px; color: #7f8d99; }
.l3 { padding-left: 96px; }
.ic-tbl { width: 26px; height: 26px; margin-right: 12.5px; color: #7f8d99; }
.selected { background: #1e2630; box-shadow: inset 6px 0 0 #4a90d9; }

.content { flex: 1; padding: 10px 25px 0 27px; min-width: 0; }
.crumbs { height: 40px; display: flex; align-items: center; gap: 9px; color: #559ce0; }
.titlerow { height: 51px; margin-top: 4px; display: flex; align-items: center; }
.schema-box { width: 51px; height: 51px; border-radius: 6px; background: #2d3741; display: flex; align-items: center; justify-content: center; color: #8c99a5; }
h1 { margin-left: 14px; font-size: 34px; letter-spacing: -.8px; font-weight: 700; color: #eef1f3; }
.title-ic { width: 24px; height: 26px; color: #8290a0; margin-top: 6px; }
.title-ic.copy { margin: 6px 21px 0 25px; }
.actions { margin-left: auto; display: flex; align-items: center; margin-top: -6px; }
.act-kebab { width: 8px; height: 24px; margin-right: 39px; color: #8d9ba7; }
.split { width: 251px; height: 51px; display: flex; border: 1px solid #3a424c; border-radius: 6px; margin-right: 13px; }
.split-main { width: 200px; padding-top: 2px; border-right: 1px solid #3a424c; display: flex; align-items: center; justify-content: center; white-space: nowrap; }
.split-chev { flex: 1; display: flex; align-items: center; justify-content: center; }
.btn { height: 51px; display: flex; align-items: center; gap: 18px; padding: 2px 0 0 20px; border-radius: 6px; border: 1px solid #3a424c; }
.share { width: 134px; margin-right: 14px; }
.primary { width: 143px; background: #5497d9; border-color: #5497d9; color: #0e1a24; }
.tabs { height: 77px; border-bottom: 1px solid #333a43; display: flex; gap: 26px; align-items: flex-end; }
.ptab { height: 58px; display: flex; align-items: center; color: #8e9cab; font-weight: 600; white-space: nowrap; border-bottom: 6px solid transparent; margin-bottom: -1px; padding-top: 6px; }
.ptab.on { color: #eef1f3; border-bottom-color: #4a90d9; }
.columns { display: flex; gap: 39px; }
.leftcol { width: 1274px; flex: none; padding-top: 28px; }
h2 { font-size: 21px; font-weight: 600; height: 30px; line-height: 30px; color: #eef1f3; white-space: nowrap; }
.desc-btns { display: flex; gap: 7px; margin-top: 6px; }
.sbtn { height: 39px; display: flex; align-items: center; gap: 8px; padding: 1px 13px 0; border: 1px solid #3a424c; border-radius: 6px; white-space: nowrap; }
.ai { width: 170px; }
.add { width: 66px; justify-content: center; padding: 1px 0 0; }
.card { margin-top: 25px; border: 1px solid #22272e; border-radius: 14px 14px 0 0; overflow: hidden; }
.card-tools { height: 91px; display: flex; align-items: flex-start; padding: 19px 20px 0 19px; background: #22272e; }
.filterbox { width: 449px; height: 51px; display: flex; align-items: center; gap: 13px; padding: 2px 0 0 20px; border: 1px solid #3a424c; border-radius: 6px; color: #82909c; }
.seg { margin-left: 13px; height: 51px; display: flex; border: 1px solid #3a424c; border-radius: 6px; white-space: nowrap; }
.seg span { display: flex; align-items: center; justify-content: center; gap: 6px; padding-top: 2px; border-right: 1px solid #3a424c; }
.seg span:last-child { border-right: 0; }
.seg .on { background: #30404f; color: #a9d3f7; outline: 1px solid #a9d3f7; border-radius: 6px 0 0 6px; }
.seg .on em { color: #87b2d6; }
.w1 { width: 146px; } .w2 { width: 154px; } .w3 { width: 142px; } .w4 { width: 165px; }
.sort { width: 111px; height: 51px; margin-left: auto; display: flex; align-items: center; gap: 18px; padding: 2px 0 0 20px; border: 1px solid #3a424c; border-radius: 6px; }
.thead, .tr { display: grid; grid-template-columns: 418px 284px 284px 1fr; }
.thead { height: 58px; border-bottom: 1px solid #262c33; align-items: center; }
.th { height: 32px; display: flex; align-items: center; padding-left: 14px; border-right: 1px solid #262c33; font-weight: 600; color: #eef1f3; }
.th:first-child { padding-left: 19px; }
.tr { height: 58.6px; align-items: center; border-bottom: 1px solid #21272d; }
.td { padding-left: 15px; white-space: nowrap; color: #e4e9ed; }
.td.name { padding-left: 19px; display: flex; align-items: center; gap: 13px; color: #559ce0; }
.tbox { width: 38px; height: 37px; border-radius: 6px; background: #2d3741; display: flex; align-items: center; justify-content: center; color: #8c99a5; }
.pop { display: block; width: 24px; height: 5px; background: repeating-linear-gradient(90deg, #4a545e 0 5px, transparent 5px 6.3px); }
.about { width: 467px; flex: none; padding-top: 28px; }
.owner { display: flex; align-items: center; height: 30px; margin-top: 15px; white-space: nowrap; }
.owner-k { width: 90px; color: #8a98a6; }
.owner svg { margin-left: 15px; }
.about-hr { margin: 29px 0 28px; border: 0; border-top: 1px solid #262c33; }
.tagbtn { width: 113px; margin-top: 10px; }
```
